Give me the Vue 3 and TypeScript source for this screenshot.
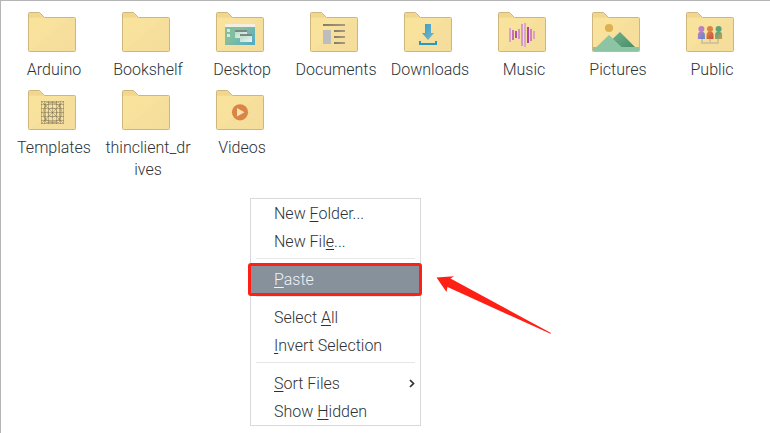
<script setup lang="ts">
interface FolderItem {
  label: string
  icon?: string
}
interface MenuItem {
  before: string
  key: string
  after: string
  active?: boolean
  submenu?: boolean
}

const folders: FolderItem[] = [
  { label: 'Arduino' },
  { label: 'Bookshelf' },
  { label: 'Desktop', icon: 'desktop' },
  { label: 'Documents', icon: 'documents' },
  { label: 'Downloads', icon: 'downloads' },
  { label: 'Music', icon: 'music' },
  { label: 'Pictures', icon: 'pictures' },
  { label: 'Public', icon: 'public' },
  { label: 'Templates', icon: 'templates' },
  { label: 'thinclient_drives' },
  { label: 'Videos', icon: 'videos' },
]

const menuGroups: MenuItem[][] = [
  [
    { before: 'New ', key: 'F', after: 'older...' },
    { before: 'New Fil', key: 'e', after: '...' },
  ],
  [{ before: '', key: 'P', after: 'aste', active: true }],
  [
    { before: 'Select ', key: 'A', after: 'll' },
    { before: '', key: 'I', after: 'nvert Selection' },
  ],
  [
    { before: '', key: 'S', after: 'ort Files', submenu: true },
    { before: 'Show ', key: 'H', after: 'idden' },
  ],
]

// x, top, height, colour of each bar in the waveform
const bars: [number, number, number, string][] = [
  [11, 16, 14, '#d9a3cb'],
  [14, 18, 10, '#c272b8'],
  [17, 19, 7, '#b84fa6'],
  [20, 17, 10, '#d193c6'],
  [23, 12, 22, '#d39bcb'],
  [26, 11, 24, '#dba8cd'],
  [29, 15, 16, '#b045a4'],
  [32, 17, 12, '#cc83bf'],
  [35, 19, 8, '#d9a3c5'],
]
const people: { x: number; head: string; fill: string }[] = [
  { x: 15.4, head: '#b880c8', fill: 'url(#personA)' },
  { x: 24, head: '#d98545', fill: 'url(#personB)' },
  { x: 32.6, head: '#5fa37c', fill: 'url(#personC)' },
]
const gridLines: number[] = [16.5, 20.5, 24.5, 28.5, 32.5]
</script>

<template>
  <main class="window">
    <svg class="defs" width="0" height="0" aria-hidden="true">
      <defs>
        <linearGradient id="folderFill" x1="0" y1="0" x2="1" y2="1">
          <stop offset="0" stop-color="#f9e49c" />
          <stop offset=".5" stop-color="#f8e19c" />
          <stop offset=".52" stop-color="#f6df9b" />
          <stop offset="1" stop-color="#f5dc9b" />
        </linearGradient>
        <linearGradient id="screen" x1="0" y1="0" x2="1" y2=".8">
          <stop offset=".45" stop-color="#82bf9e" />
          <stop offset="1" stop-color="#55adc5" />
        </linearGradient>
        <linearGradient id="pane" x1="0" y1="0" x2="1" y2="1">
          <stop offset="0" stop-color="#b5d9c8" />
          <stop offset="1" stop-color="#e9f3f0" />
        </linearGradient>
        <linearGradient id="bar" x1="0" y1="0" x2="1" y2="0">
          <stop offset="0" stop-color="#817b6b" />
          <stop offset="1" stop-color="#a79c80" />
        </linearGradient>
        <linearGradient id="down" x1="0" y1="0" x2="1" y2="1">
          <stop offset="0" stop-color="#359ecb" />
          <stop offset="1" stop-color="#7db5c2" />
        </linearGradient>
        <linearGradient id="hill" x1="0" y1="0" x2="1" y2="1">
          <stop offset=".3" stop-color="#65a782" />
          <stop offset="1" stop-color="#488e68" />
        </linearGradient>
        <linearGradient id="personA" x1="0" y1="0" x2="1" y2="1">
          <stop offset=".2" stop-color="#b77bc5" />
          <stop offset="1" stop-color="#4b8fc7" />
        </linearGradient>
        <linearGradient id="personB" x1="0" y1="0" x2="1" y2="1">
          <stop offset=".2" stop-color="#d88045" />
          <stop offset="1" stop-color="#cb4840" />
        </linearGradient>
        <linearGradient id="personC" x1="0" y1="0" x2="1" y2="1">
          <stop offset=".2" stop-color="#5ca57f" />
          <stop offset="1" stop-color="#d29a49" />
        </linearGradient>
      </defs>
    </svg>

    <section class="files">
      <div v-for="folder in folders" :key="folder.label" class="file">
        <svg class="folder" width="48" height="40" viewBox="0 0 48 40">
          <path d="M.5 38.5V1.5Q.5.5 1.5.5H11.5L16.5 5.5H46.5Q47.5 5.5 47.5 6.5V38.5Q47.5 39.5 46.5 39.5H1.5Q.5 39.5.5 38.5Z" fill="url(#folderFill)" />
          <path d="M1 1H11.3L16 5.8H1Z" fill="#f3d68d" />
          <g v-if="folder.icon === 'desktop'">
            <rect x="9" y="12" width="30" height="21" fill="url(#screen)" />
            <rect x="9" y="12" width="30" height="3" fill="#f3efe5" />
            <path d="M11 17h3v3h-3zM11 22h3v3h-3z" fill="#d5eadf" />
            <rect x="19" y="18" width="12" height="8" fill="url(#pane)" />
            <rect x="19" y="18" width="12" height="2" fill="#7b8984" />
            <rect x="24" y="22" width="12" height="8" fill="url(#pane)" />
            <rect x="24" y="22" width="12" height="2" fill="#7b8984" />
          </g>
          <g v-else-if="folder.icon === 'documents'" fill="url(#bar)">
            <rect x="13" y="12" width="22" height="2" />
            <rect x="13" y="18" width="8" height="14" fill="#bdbdbd" />
            <rect x="24" y="18" width="11" height="2" />
            <rect x="24" y="24" width="11" height="2" />
            <rect x="24" y="30" width="11" height="2" />
          </g>
          <g v-else-if="folder.icon === 'downloads'">
            <path d="M21 12h6v9h3l-6 7-6-7h3z" fill="url(#down)" />
            <path d="M16 29v3h16v-3" fill="none" stroke="#249ac4" stroke-width="2" />
          </g>
          <g v-else-if="folder.icon === 'music'">
            <rect v-for="b in bars" :key="b[0]" :x="b[0]" :y="b[1]" width="2" :height="b[2]" :fill="b[3]" />
          </g>
          <g v-else-if="folder.icon === 'pictures'">
            <circle cx="17" cy="16" r="4.1" fill="#ddb052" />
            <path d="M28 20L43 35H20V27.5Z" fill="url(#hill)" />
            <path d="M17 23L29.5 35H47V39H1V35H4.5Z" fill="#8cc4a4" />
          </g>
          <g v-else-if="folder.icon === 'public'">
            <path d="M16 27v4h16v-4M24 27v4" fill="none" stroke="#d5c49b" stroke-width="2" />
            <g v-for="p in people" :key="p.x">
              <circle :cx="p.x" cy="17" r="3" :fill="p.head" />
              <path :d="`M${p.x - 3.5} 27v-4q0-3.5 3.5-3.5t3.5 3.5v4z`" :fill="p.fill" />
            </g>
          </g>
          <g v-else-if="folder.icon === 'templates'" fill="none" stroke="#5d5644" stroke-opacity=".5" stroke-width=".7">
            <rect x="13.5" y="11.5" width="22" height="22" />
            <path v-for="n in gridLines" :key="n" :d="`M${n} 11V34M13 ${n - 2}H36`" />
            <path d="M13 11L36 34M36 11L13 34" />
            <circle cx="24.5" cy="22.5" r="9.5" />
            <circle cx="24.5" cy="22.5" r="4.5" />
            <rect x="17.5" y="12.5" width="14" height="20" rx="1" />
          </g>
          <g v-else-if="folder.icon === 'videos'">
            <circle cx="24" cy="22.3" r="8.1" fill="#d98545" />
            <path d="M21 18l7.5 4.3-7.5 4.3z" fill="#f8e1b5" />
          </g>
          <path d="M.5 38.5V1.5Q.5.5 1.5.5H11.5L16.5 5.5H46.5Q47.5 5.5 47.5 6.5V38.5Q47.5 39.5 46.5 39.5H1.5Q.5 39.5.5 38.5Z" fill="none" stroke="#cfb67c" />
        </svg>
        <span class="name">{{ folder.label }}</span>
      </div>
    </section>

    <nav class="menu">
      <div v-for="(group, i) in menuGroups" :key="i" class="group">
        <div v-for="item in group" :key="item.key" class="item" :class="{ active: item.active }">
          <span class="text">{{ item.before }}<span class="key">{{ item.key }}</span>{{ item.after }}</span>
          <svg v-if="item.submenu" class="chevron" width="6" height="9" viewBox="0 0 6 9">
            <path d="M1 1L4.5 4.5L1 8" fill="none" stroke="#2d3236" stroke-width="1.7" />
          </svg>
        </div>
      </div>
    </nav>

    <div class="highlight"></div>
    <svg class="arrow" width="116" height="60" viewBox="0 0 116 60">
      <path d="M.5 1.5L18 .3L14.5 2.5L115 57L114.5 57.8L11.5 11L10.5 16Z" fill="#ff2015" />
    </svg>
  </main>
</template>

<style>
body {
  margin: 0;
  background: #fff;
}
</style>

<style scoped>
.window {
  position: relative;
  box-sizing: border-box;
  width: 770px;
  height: 433px;
  overflow: hidden;
  border-top: 1px solid #b5b5b5;
  border-left: 1px solid #b5b5b5;
  background: #fff;
  color: #2d3236;
  font-family: Roboto, sans-serif;
  font-size: 16px;
  font-weight: 300;
}
.defs {
  position: absolute;
}
.files {
  display: grid;
  grid-template-columns: repeat(8, 94px);
  grid-auto-rows: 78px;
  padding: 11px 0 0 6px;
}
.file {
  display: flex;
  flex-direction: column;
  align-items: center;
}
.folder {
  display: block;
  flex: none;
  margin-right: 4px;
}
.name {
  width: 88px;
  margin-top: 7px;
  line-height: 22px;
  text-align: center;
  word-break: break-all;
}
.menu {
  position: absolute;
  left: 249px;
  top: 197px;
  box-sizing: border-box;
  width: 171px;
  border: 1px solid #d9d9d9;
  background: #fff;
}
.group + .group::before {
  content: '';
  display: block;
  height: 1px;
  margin: 3px 5px 6px;
  background: #e6e6e6;
}
.item {
  display: flex;
  align-items: center;
  justify-content: space-between;
  height: 28px;
  padding: 0 5px 0 23px;
}
.item.active {
  background: #87919b;
  color: #f1f2f3;
}
.text {
  white-space: pre;
}
.key {
  text-decoration: underline;
  text-decoration-thickness: 1px;
  text-underline-offset: 2px;
  text-decoration-skip-ink: none;
}
.highlight {
  position: absolute;
  left: 247px;
  top: 262px;
  box-sizing: border-box;
  width: 174px;
  height: 33px;
  border: 3px solid #ff2015;
  border-radius: 3px;
}
.arrow {
  position: absolute;
  left: 435px;
  top: 275px;
}
</style>
